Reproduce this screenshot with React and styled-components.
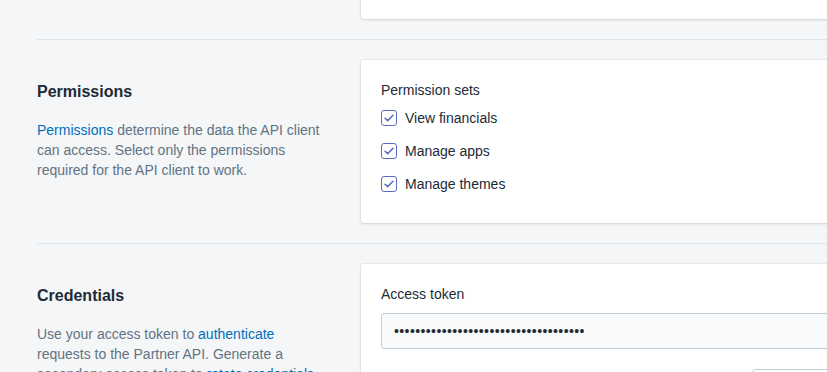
import styled, { createGlobalStyle } from "styled-components";

const GlobalStyle = createGlobalStyle`
  html, body {
    margin: 0;
    padding: 0;
    background: #f4f6f8;
    overflow: hidden;
  }
  body {
    font-family: "Liberation Sans", Arial, sans-serif;
    font-size: 14px;
    line-height: 20px;
    color: #212b36;
  }
`;

const permissionSets = ["View financials", "Manage apps", "Manage themes"];

function CheckIcon() {
  return (
    <svg width="10" height="8" viewBox="0 0 10 8" fill="none">
      <path d="M1 4.2 3.7 6.6 9 1.2" stroke="#5c6ac4" strokeWidth="1.5" strokeLinecap="round" strokeLinejoin="round" />
    </svg>
  );
}

export default function App() {
  return (
    <>
      <GlobalStyle />
      <Page>
        <TopRow>
          <Spacer />
          <TopCard />
        </TopRow>
        <Divider />
        <Section>
          <Annotation>
            <Heading>Permissions</Heading>
            <Description>
              <Link>Permissions</Link> determine the data the API client can access. Select only the
              permissions required for the API client to work.
            </Description>
          </Annotation>
          <Card>
            <CardBody $bottom={29}>
              <Label>Permission sets</Label>
              <ChoiceList>
                {permissionSets.map((name) => (
                  <Choice key={name}>
                    <Box>
                      <CheckIcon />
                    </Box>
                    <span>{name}</span>
                  </Choice>
                ))}
              </ChoiceList>
            </CardBody>
          </Card>
        </Section>
        <Divider />
        <Section>
          <Annotation>
            <Heading>Credentials</Heading>
            <Description>
              Use your access token to <Link>authenticate</Link> requests to the Partner API. Generate a
              secondary access token to <Link>rotate credentials</Link> without downtime.
            </Description>
          </Annotation>
          <Card>
            <CardBody $bottom={20}>
              <Label>Access token</Label>
              <Field>{"•".repeat(36)}</Field>
              <Actions>
                <Button>Generate secondary token</Button>
              </Actions>
            </CardBody>
          </Card>
        </Section>
      </Page>
    </>
  );
}

const Page = styled.div`
  width: 960px;
  padding-left: 37px;
`;

const TopRow = styled.div`
  display: flex;
  gap: 20px;
  margin-top: -40px;
`;

const Spacer = styled.div`
  width: 304px;
  flex: none;
`;

const TopCard = styled.div`
  flex: 1;
  height: 59px;
  background: #fff;
  border-radius: 3px;
  box-shadow: 0 0 0 1px rgba(63, 63, 68, 0.05), 0 1px 3px 0 rgba(63, 63, 68, 0.15);
`;

const Divider = styled.hr`
  margin: 20px 0;
  border: 0;
  border-top: 1px solid #dfe3e8;
`;

const Section = styled.section`
  display: flex;
  gap: 20px;
  align-items: flex-start;
`;

const Annotation = styled.div`
  width: 304px;
  flex: none;
  padding-top: 21px;
`;

const Heading = styled.h2`
  margin: 0;
  font-size: 16px;
  line-height: 22px;
  font-weight: 700;
  color: #212b36;
`;

const Description = styled.p`
  margin: 17px 0 0;
  color: #637381;
  width: 290px;
`;

const Link = styled.a`
  color: #006fbb;
  text-decoration: none;
  cursor: pointer;
`;

const Card = styled.div`
  flex: 1;
  background: #fff;
  border-radius: 3px;
  box-shadow: 0 0 0 1px rgba(63, 63, 68, 0.05), 0 1px 3px 0 rgba(63, 63, 68, 0.15);
`;

const CardBody = styled.div`
  padding: 20px 20px ${(p) => p.$bottom}px;
`;

const Label = styled.div`
  color: #212b36;
`;

const ChoiceList = styled.div`
  display: flex;
  flex-direction: column;
  gap: 13px;
  margin-top: 8px;
`;

const Choice = styled.label`
  display: flex;
  align-items: center;
  gap: 8px;
  color: #212b36;
`;

const Box = styled.span`
  width: 16px;
  height: 16px;
  box-sizing: border-box;
  border: 1px solid #5c6ac4;
  border-radius: 3px;
  display: flex;
  align-items: center;
  justify-content: center;
  background: #fff;
`;

const Field = styled.div`
  margin-top: 9px;
  height: 36px;
  box-sizing: border-box;
  border: 1px solid #c4cdd5;
  border-radius: 3px;
  background: #f9fafb;
  padding: 0 12px;
  display: flex;
  align-items: center;
  font-size: 14px;
  letter-spacing: 0.4px;
  color: #212b36;
`;

const Actions = styled.div`
  display: flex;
  justify-content: flex-end;
  margin-top: 20px;
`;

const Button = styled.button`
  height: 36px;
  padding: 0 29px;
  border: 1px solid #c4cdd5;
  border-radius: 3px;
  background: linear-gradient(180deg, #fff, #f9fafb);
  font-family: inherit;
  font-size: 14px;
  color: #212b36;
`;
